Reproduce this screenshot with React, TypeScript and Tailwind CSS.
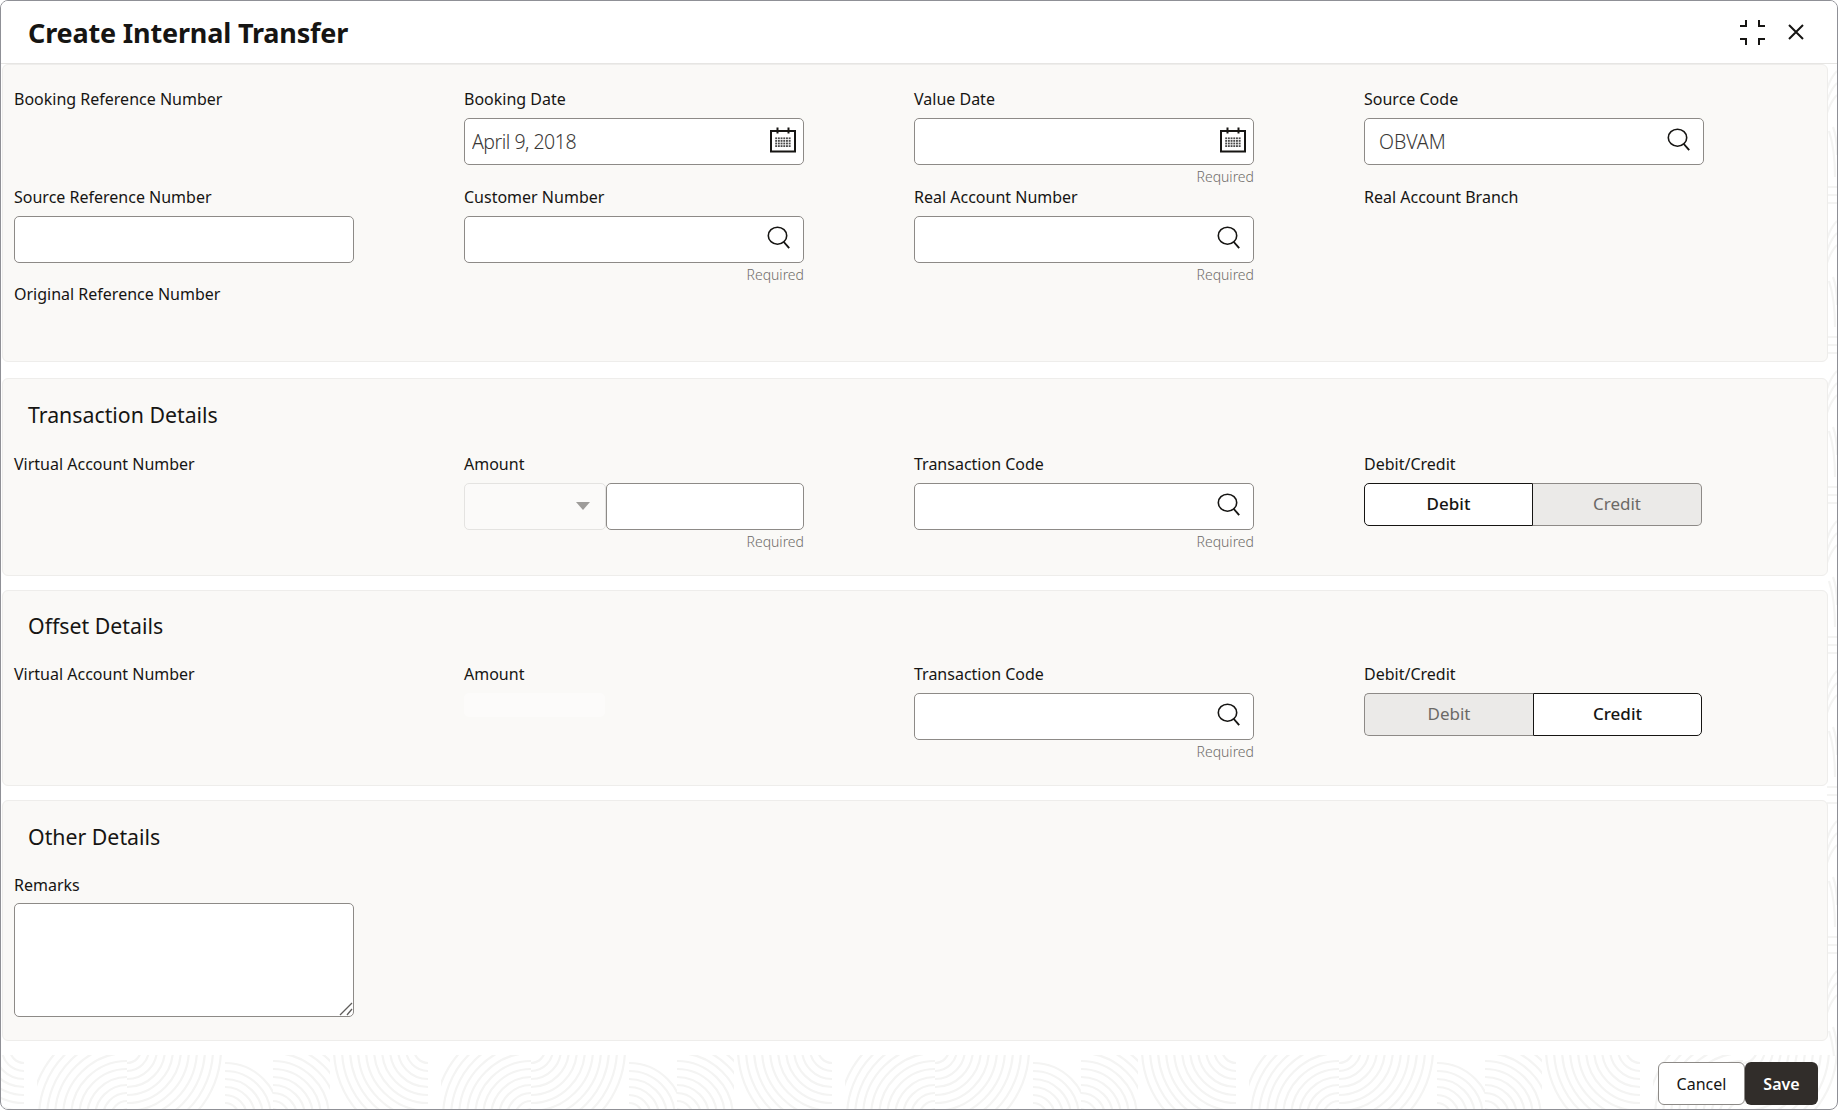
import React from "react";

function SearchIcon() {
  return (
    <svg width="24" height="24" viewBox="0 0 24 24" fill="none" stroke="#161513" strokeWidth="1.6" className="absolute top-[10px] right-[13px]">
      <ellipse cx="10.5" cy="9.7" rx="9.2" ry="8.5" />
      <path d="M16.8 16 L22.2 22.2" strokeWidth="1.9" />
    </svg>
  );
}

function CalendarIcon() {
  const dots: React.ReactElement[] = [];
  for (let r = 0; r < 4; r++) {
    for (let c = 0; c < 6; c++) {
      dots.push(<rect key={`${r}-${c}`} x={5.2 + c * 2.7} y={10.4 + r * 2.6} width="1.9" height="1.8" fill="#4a4a4a" />);
    }
  }
  return (
    <svg width="26" height="26" viewBox="0 0 26 26" fill="none" className="absolute top-[9px] right-[8px]">
      <rect x="1" y="4" width="24" height="20.5" stroke="#161513" strokeWidth="2" fill="#fff" />
      <path d="M7.5 0.5V6.5M18.5 0.5V6.5" stroke="#161513" strokeWidth="2" />
      {dots}
    </svg>
  );
}

function TextBox({ icon, value, valueClass }: { icon?: "search" | "date"; value?: string; valueClass?: string }) {
  return (
    <div className="relative h-[47px] w-[340px]">
      <input
        readOnly
        value={value ?? ""}
        className={`h-full w-full rounded-[5px] border border-[#8d8a87] bg-white ${valueClass ?? "pl-[8px]"} font-light text-[#3a3836] outline-none`}
      />
      {icon === "search" && <SearchIcon />}
      {icon === "date" && <CalendarIcon />}
    </div>
  );
}

function Label({ children, h = "h-[31px]" }: { children: React.ReactNode; h?: string }) {
  return <div className={`${h} text-[16px] leading-[24px] text-[#161513]`}>{children}</div>;
}

function Required() {
  return <div className="w-[340px] pt-[2px] text-right text-[14px] leading-[20px] font-light text-[#6f6c69]">Required</div>;
}

function Toggle({ active }: { active: "Debit" | "Credit" }) {
  const on = "border-[#161513] bg-white text-[#161513] font-medium";
  const off = "border-[#8d8a87] bg-[#ebeae8] text-[#6b6966]";
  const debitOn = active === "Debit";
  return (
    <div className="flex h-[43px] w-[338px] text-[17px]">
      <button className={`w-[169px] rounded-l-[5px] border pb-px ${debitOn ? on : off + " border-r-0"}`}>Debit</button>
      <button className={`w-[169px] rounded-r-[5px] border pb-px ${debitOn ? off + " border-l-0" : on}`}>Credit</button>
    </div>
  );
}

function Section({ className, children }: { className: string; children: React.ReactNode }) {
  return (
    <section className={`mr-[9px] ml-px rounded-[6px] border border-[#eeedeb] bg-[#faf9f7] pl-[11px] ${className}`}>
      {children}
    </section>
  );
}

function Heading({ children, className }: { children: React.ReactNode; className: string }) {
  return <h2 className={`pl-[14px] text-[21.3px] leading-[28px] font-normal text-[#161513] ${className}`}>{children}</h2>;
}

const Grid = ({ children, className = "" }: { children: React.ReactNode; className?: string }) => (
  <div className={`grid grid-cols-[450px_450px_450px_340px] ${className}`}>{children}</div>
);

const arcs = (cx: number, cy: number, clip: string, from: number, to: number, step: number, key: string) => {
  const out: React.ReactElement[] = [];
  for (let r = from; r <= to; r += step) {
    out.push(<circle key={`${key}${r}`} cx={cx} cy={cy} r={r} fill="none" stroke="#f4f4f3" strokeWidth="2.2" clipPath={`url(#${clip})`} />);
  }
  return out;
};

function FooterPattern() {
  const clips: [string, number, number][] = [
    ["ca", 0, 90],
    ["cb", 90, 98],
    ["cc", 188, 48],
    ["cd", 236, 57],
    ["ce", 293, 98],
  ];
  return (
    <svg className="absolute right-0 bottom-0 left-0 h-[54px] w-full" aria-hidden="true">
      <defs>
        {clips.map(([id, x, w]) => (
          <clipPath id={id} key={id}>
            <rect x={x} y={0} width={w} height={56} />
          </clipPath>
        ))}
        <pattern id="ftile" patternUnits="userSpaceOnUse" x="36" y="0" width="404" height="56">
          {arcs(90, 62, "ca", 8, 96, 8, "a")}
          {arcs(90, -6, "cb", 14, 100, 8, "b")}
          {arcs(188, 62, "cc", 6, 54, 8, "c")}
          {arcs(236, 62, "cd", 8, 96, 8, "d")}
          {arcs(391, -6, "ce", 14, 100, 8, "e")}
        </pattern>
      </defs>
      <rect width="100%" height="100%" fill="url(#ftile)" />
    </svg>
  );
}

function SidePattern() {
  return (
    <svg className="absolute top-[64px] right-0 h-[991px] w-[10px]" aria-hidden="true">
      <defs>
        <pattern id="stile" patternUnits="userSpaceOnUse" x="0" y="0" width="10" height="150">
          <path d="M0 24Q4 12 10 6M0 36Q4 24 10 18M0 48Q4 36 10 30" fill="none" stroke="#f4f4f3" strokeWidth="2.2" />
          <path d="M2 66Q8 84 8 112M6 62Q10 72 10 90" fill="none" stroke="#f4f4f3" strokeWidth="2.2" />
          <path d="M0 122H10M0 130H10M0 138H10" fill="none" stroke="#f4f4f3" strokeWidth="2.2" />
        </pattern>
      </defs>
      <rect width="100%" height="100%" fill="url(#stile)" />
    </svg>
  );
}

export default function App() {
  return (
    <div className="relative flex h-[1110px] w-[1838px] flex-col overflow-hidden rounded-[8px] border border-[#8f9096] bg-white font-['Noto_Sans',sans-serif]">
      <SidePattern />
      <header className="relative flex h-[63px] shrink-0 items-center justify-between border-b border-[#e6e5e3] bg-white pr-[33px] pl-[27px]">
        <h1 className="pt-[2px] text-[27px] leading-[36px] font-bold tracking-[-0.18px] text-[#161513]">Create Internal Transfer</h1>
        <div className="flex items-center gap-[23px]">
          <svg width="25" height="25" viewBox="0 0 25 25" fill="none" stroke="#161513" strokeWidth="2">
            <path d="M0 6H6V0M19 0V6H25M0 19H6V25M19 25V19H25" />
          </svg>
          <svg width="16" height="16" viewBox="0 0 16 16" fill="none" stroke="#161513" strokeWidth="2">
            <path d="M1 1L15 15M15 1L1 15" />
          </svg>
        </div>
      </header>

      <Section className="relative h-[298px] shrink-0 pt-[22px]">
        <Grid className="h-[98px]">
          <div><Label>Booking Reference Number</Label></div>
          <div><Label>Booking Date</Label><TextBox icon="date" value="April 9, 2018" valueClass="pl-[7px] text-[19.5px] tracking-[-0.5px]" /></div>
          <div><Label>Value Date</Label><TextBox icon="date" /><Required /></div>
          <div><Label>Source Code</Label><TextBox icon="search" value="OBVAM" valueClass="pl-[14px] text-[19.5px]" /></div>
        </Grid>
        <Grid className="h-[97px]">
          <div><Label>Source Reference Number</Label><TextBox /></div>
          <div><Label>Customer Number</Label><TextBox icon="search" /><Required /></div>
          <div><Label>Real Account Number</Label><TextBox icon="search" /><Required /></div>
          <div><Label>Real Account Branch</Label></div>
        </Grid>
        <Label>Original Reference Number</Label>
      </Section>

      <Section className="relative mt-[16px] h-[198px] shrink-0">
        <Heading className="mt-[22px] mb-[23px]">Transaction Details</Heading>
        <Grid>
          <div><Label>Virtual Account Number</Label></div>
          <div>
            <Label>Amount</Label>
            <div className="flex h-[47px] w-[340px]">
              <div className="relative w-[142px] shrink-0 rounded-[5px] border border-[#e4e3e1] bg-[#fbfaf9]">
                <svg width="14" height="8" viewBox="0 0 14 8" className="absolute top-[18px] right-[15px]">
                  <path d="M0 0H14L7 8Z" fill="#9e9c9a" />
                </svg>
              </div>
              <input readOnly className="h-full w-[198px] min-w-0 rounded-[5px] border border-[#8d8a87] bg-white outline-none" />
            </div>
            <Required />
          </div>
          <div><Label>Transaction Code</Label><TextBox icon="search" /><Required /></div>
          <div><Label>Debit/Credit</Label><Toggle active="Debit" /></div>
        </Grid>
      </Section>

      <Section className="relative mt-[14px] h-[196px] shrink-0">
        <Heading className="mt-[21px] mb-[22px]">Offset Details</Heading>
        <Grid>
          <div><Label>Virtual Account Number</Label></div>
          <div>
            <Label>Amount</Label>
            <div className="h-[24px] w-[141px] rounded-[5px] bg-[#fcfbfa]" />
          </div>
          <div><Label>Transaction Code</Label><TextBox icon="search" /><Required /></div>
          <div><Label>Debit/Credit</Label><Toggle active="Credit" /></div>
        </Grid>
      </Section>

      <Section className="relative mt-[14px] h-[241px] shrink-0">
        <Heading className="mt-[22px] mb-[22px]">Other Details</Heading>
        <Label h="h-[30px]">Remarks</Label>
        <div className="relative h-[114px] w-[340px]">
          <textarea readOnly className="block h-full w-full resize-none rounded-[5px] border border-[#8d8a87] bg-white outline-none" />
          <svg width="14" height="14" viewBox="0 0 14 14" fill="none" stroke="#5f5d5b" strokeWidth="1.3" className="absolute right-px bottom-px">
            <path d="M1 13L13 1M8 13L13 7" />
          </svg>
        </div>
      </Section>

      <footer className="relative flex flex-1 items-start justify-end pt-[21px] pr-[19px]">
        <FooterPattern />
        <button className="relative h-[43px] w-[87px] rounded-[6px] border border-[#8d8a87] bg-white text-[16px] text-[#161513]">Cancel</button>
        <button className="relative h-[43px] w-[73px] rounded-[6px] bg-[#312d2a] text-[16px] font-semibold text-white">Save</button>
      </footer>
    </div>
  );
}
